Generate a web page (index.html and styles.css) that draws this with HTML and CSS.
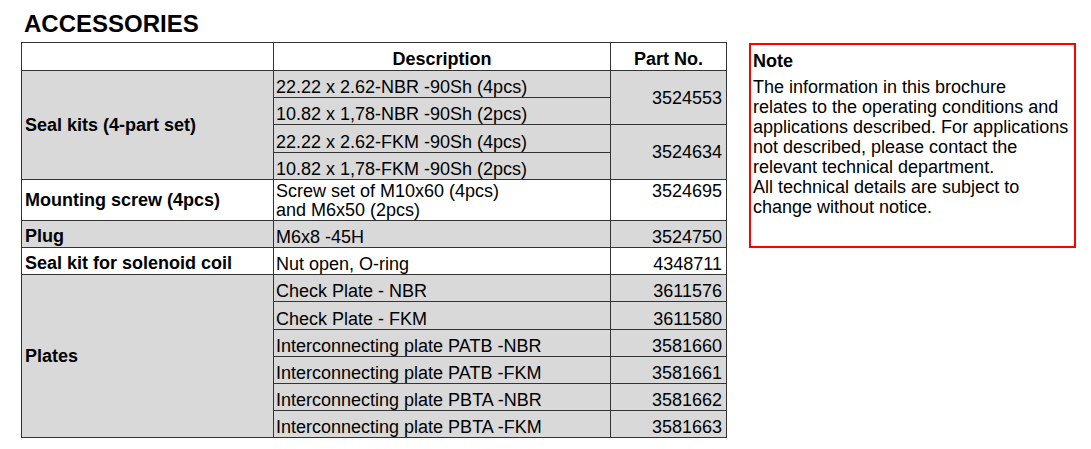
FILE: index.html
```html
<!DOCTYPE html>
<html>
<head>
<meta charset="utf-8">
<link rel="stylesheet" href="styles.css">
</head>
<body>
<div class="page">
  <h1 class="title">ACCESSORIES</h1>
  <div class="content">
    <table class="acc">
      <colgroup><col class="c1"><col class="c2"><col class="c3"></colgroup>
      <thead>
        <tr class="head"><th></th><th>Description</th><th>Part No.</th></tr>
      </thead>
      <tbody>
        <tr class="gray"><td rowspan="4" class="label">Seal kits (4-part set)</td><td class="desc">22.22 x 2.62-NBR -90Sh (4pcs)</td><td rowspan="2" class="part mid">3524553</td></tr>
        <tr class="gray"><td class="desc">10.82 x 1,78-NBR -90Sh (2pcs)</td></tr>
        <tr class="gray"><td class="desc">22.22 x 2.62-FKM -90Sh (4pcs)</td><td rowspan="2" class="part mid">3524634</td></tr>
        <tr class="gray"><td class="desc">10.82 x 1,78-FKM -90Sh (2pcs)</td></tr>
        <tr class="white tall"><td class="label">Mounting screw (4pcs)</td><td class="desc top">Screw set of M10x60 (4pcs)<br>and M6x50 (2pcs)</td><td class="part top">3524695</td></tr>
        <tr class="gray"><td class="label single">Plug</td><td class="desc">M6x8 -45H</td><td class="part">3524750</td></tr>
        <tr class="white"><td class="label single">Seal kit for solenoid coil</td><td class="desc">Nut open, O-ring</td><td class="part">4348711</td></tr>
        <tr class="gray"><td rowspan="6" class="label">Plates</td><td class="desc">Check Plate - NBR</td><td class="part">3611576</td></tr>
        <tr class="gray"><td class="desc">Check Plate - FKM</td><td class="part">3611580</td></tr>
        <tr class="gray"><td class="desc">Interconnecting plate PATB -NBR</td><td class="part">3581660</td></tr>
        <tr class="gray"><td class="desc">Interconnecting plate PATB -FKM</td><td class="part">3581661</td></tr>
        <tr class="gray"><td class="desc">Interconnecting plate PBTA -NBR</td><td class="part">3581662</td></tr>
        <tr class="gray"><td class="desc">Interconnecting plate PBTA -FKM</td><td class="part">3581663</td></tr>
      </tbody>
    </table>
    <div class="note">
      <div class="note-title">Note</div>
      <p class="note-text">The information in this brochure<br>relates to the operating conditions and<br>applications described. For applications<br>not described, please contact the<br>relevant technical department.<br>All technical details are subject to<br>change without notice.</p>
    </div>
  </div>
</div>
</body>
</html>
```

FILE: styles.css
```css
html, body {
  margin: 0;
  padding: 0;
  background: #fff;
}
body {
  font-family: "Liberation Sans", Arial, sans-serif;
  color: #000;
}
.page {
  padding-top: 10px;
}
.title {
  margin: 0 0 4px 24px;
  font-size: 24px;
  line-height: 28px;
  font-weight: bold;
}
.content {
  display: flex;
  align-items: flex-start;
}
.acc {
  margin-left: 21px;
  border-collapse: collapse;
  table-layout: fixed;
  width: 705px;
  font-size: 18px;
  line-height: 20px;
}
.c1 { width: 252px; }
.c2 { width: 337px; }
.c3 { width: 116px; }
.acc th, .acc td {
  border: 1px solid #333;
  padding: 0;
  vertical-align: bottom;
  white-space: nowrap;
}
.acc tr { height: 27.2px; }
.acc tr.head { height: 28px; }
.acc tr.tall { height: 39.8px; }
.acc th {
  font-weight: bold;
  text-align: center;
  background: #fff;
  padding-bottom: 1px;
}
.gray td { background: #d9d9d9; }
.white td { background: #fff; }
.label {
  font-weight: bold;
  padding-left: 3px !important;
  vertical-align: middle !important;
}
.label.single {
  vertical-align: bottom !important;
  padding-bottom: 1px !important;
}
.desc {
  padding-left: 2px !important;
}
.part {
  text-align: right;
  padding-right: 4px !important;
}
.mid { vertical-align: middle !important; }
.top {
  vertical-align: top !important;
  padding-top: 2px !important;
  line-height: 19px;
}
.note {
  box-sizing: border-box;
  width: 327px;
  height: 205px;
  margin-left: 22px;
  margin-top: 1px;
  border: 2px solid #ff0000;
  padding: 6px 2px;
  font-size: 18px;
  line-height: 20px;
}
.note-title {
  font-weight: bold;
  margin-bottom: 6px;
}
.note-text {
  margin: 0;
}
```
